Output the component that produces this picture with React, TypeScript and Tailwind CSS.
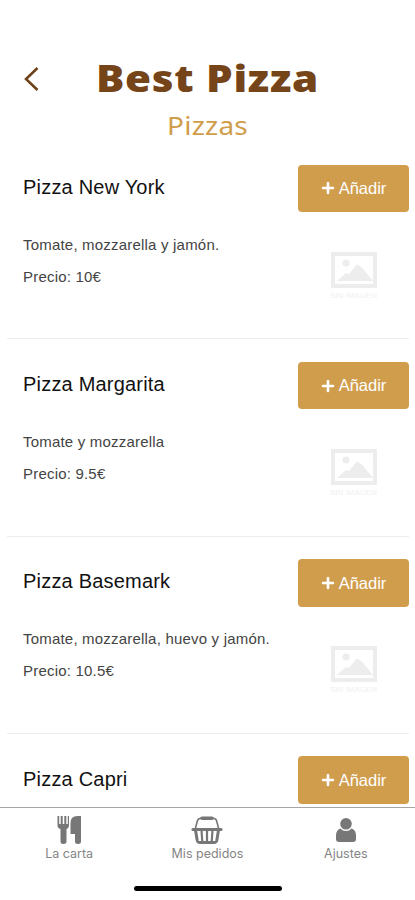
import { FaPlus } from "react-icons/fa";

type Pizza = { name: string; description?: string; price?: string };

const pizzas: Pizza[] = [
  { name: "Pizza New York", description: "Tomate, mozzarella y jamón.", price: "10€" },
  { name: "Pizza Margarita", description: "Tomate y mozzarella", price: "9.5€" },
  { name: "Pizza Basemark", description: "Tomate, mozzarella, huevo y jamón.", price: "10.5€" },
  { name: "Pizza Capri" },
];

function NoImage() {
  return (
    <div className="flex w-[48px] flex-col items-center">
      <svg width="46" height="36" viewBox="0 0 46 36" fill="#ededed">
        <path d="M0 0h46v36H0zM4 4v28h38V4z" fillRule="evenodd" />
        <circle cx="15" cy="11" r="3.6" />
        <path d="M6 29l9-8 3 1 8-9.500 5 3 11 13.500z" />
      </svg>
      <span className="mt-[3px] whitespace-nowrap text-[8px] leading-[10px] text-[#f0f0f0]">SIN IMAGEN</span>
    </div>
  );
}

function PizzaRow({ name, description, price }: Pizza) {
  return (
    <li className="ml-[7px] mr-[6px] flex h-[197.3px] shrink-0 justify-between border-b border-[#ececec] pl-4">
      <div className="flex flex-col pt-[32.800px]">
        <h2 className="text-[20px] leading-6 tracking-[0.2px] text-[#111]">{name}</h2>
        {description && <p className="mt-[36px] text-[15px] leading-5 tracking-[0.2px] text-[#444]">{description}</p>}
        {price && <p className="mt-3 text-[15px] leading-5 tracking-[0.2px] text-[#444]">Precio: {price}</p>}
      </div>
      <div className="flex w-[111px] flex-col items-center pt-[22.6px]">
        <button className="flex h-[47.5px] w-full shrink-0 items-center justify-center gap-1 rounded bg-[#d09d4c] text-[16.5px] text-white">
          <FaPlus className="size-[14px]" />
          Añadir
        </button>
        {description && (
          <div className="mt-[39.500px]">
            <NoImage />
          </div>
        )}
      </div>
    </li>
  );
}

function CutleryIcon() {
  return (
    <svg width="24" height="28" viewBox="0 0 24 28" fill="#777">
      <path d="M.5 0h1.700v8h1.500V0h2v8h1.600V0h2v8h1.500V0H12v9.500q0 2.500-2.500 3.500V25.500Q9.500 28 6.500 28T3.500 25.500V13Q.5 12 .5 9.500z" />
      <path d="M24 0v25.500q0 2.500-3 2.500t-3-2.500V18h-4.500V7q0-7 7-7z" />
    </svg>
  );
}

function BasketIcon() {
  return (
    <svg width="32" height="28" viewBox="0 0 32 28" fill="none" stroke="#777">
      <path d="M4.500 12L6.500 4.500Q7.200 2.300 10 2.300M27.500 12L25.500 4.500Q24.800 2.300 22 2.300" strokeWidth="1.600" />
      <path d="M11 2.300h10" strokeWidth="3.600" strokeLinecap="round" />
      <path d="M2 13.500h28" strokeWidth="3.200" strokeLinecap="round" />
      <path d="M4.500 14l1.700 10.500Q6.700 26.500 9 26.500h14q2.300 0 2.800-2L27.500 14" strokeWidth="3" />
      <path d="M10.500 14l.8 12M16 14v12M21.500 14l-.8 12" strokeWidth="2.200" />
    </svg>
  );
}

function PersonIcon() {
  return (
    <svg width="20" height="24" viewBox="0 0 20 24" fill="#777">
      <circle cx="10" cy="5.800" r="5.800" />
      <path d="M4.500 10.500Q0 12 0 17.500V21q0 3 3 3h14q3 0 3-3v-3.500q0-5.500-4.500-7-2 2.500-5.500 2.500t-5.500-2.500z" />
    </svg>
  );
}

const tabs = [
  { label: "La carta", Icon: CutleryIcon },
  { label: "Mis pedidos", Icon: BasketIcon },
  { label: "Ajustes", Icon: PersonIcon },
];

export default function App() {
  return (
    <div className="flex h-[900px] w-[415px] flex-col overflow-hidden bg-white font-['Liberation_Sans',sans-serif]">
      <header className="h-[142px] shrink-0 pt-[57px]">
        <div className="flex h-[42px] items-center">
          <button className="ml-6 mt-0.5 w-[15px]" aria-label="Volver">
            <svg width="15" height="24" viewBox="0 0 15 24" fill="none" stroke="#6e4017" strokeWidth="2.500">
              <path d="M13.500 1L2 12l11.500 11" />
            </svg>
          </button>
          <h1 className="ml-[57px] origin-left scale-x-[1.14] whitespace-nowrap font-['Noto_Sans',sans-serif] text-[37px] font-black leading-[42px] tracking-[0.6px] text-[#754418]">
            Best Pizza
          </h1>
        </div>
        <p className="mt-[9px] scale-x-[1.12] text-center font-['Noto_Sans',sans-serif] text-[25px] leading-[34px] tracking-[0.2px] text-[#d09d4c]">
          Pizzas
        </p>
      </header>

      <ul className="flex min-h-0 flex-1 flex-col overflow-hidden">
        {pizzas.map((pizza) => (
          <PizzaRow key={pizza.name} {...pizza} />
        ))}
      </ul>

      <footer className="flex h-[93px] shrink-0 flex-col items-center border-t border-[#a5a5a5] bg-white">
        <nav className="grid w-full grid-cols-3">
          {tabs.map(({ label, Icon }) => (
            <a key={label} className="flex flex-col items-center">
              <span className="mt-[8px] flex h-[28px] items-center">
                <Icon />
              </span>
              <span className="mt-[2px] font-['Inter',sans-serif] text-[12.5px] leading-4 text-[#858585]">{label}</span>
            </a>
          ))}
        </nav>
        <div className="mt-[24px] h-[5px] w-[148px] rounded-full bg-black" />
      </footer>
    </div>
  );
}
